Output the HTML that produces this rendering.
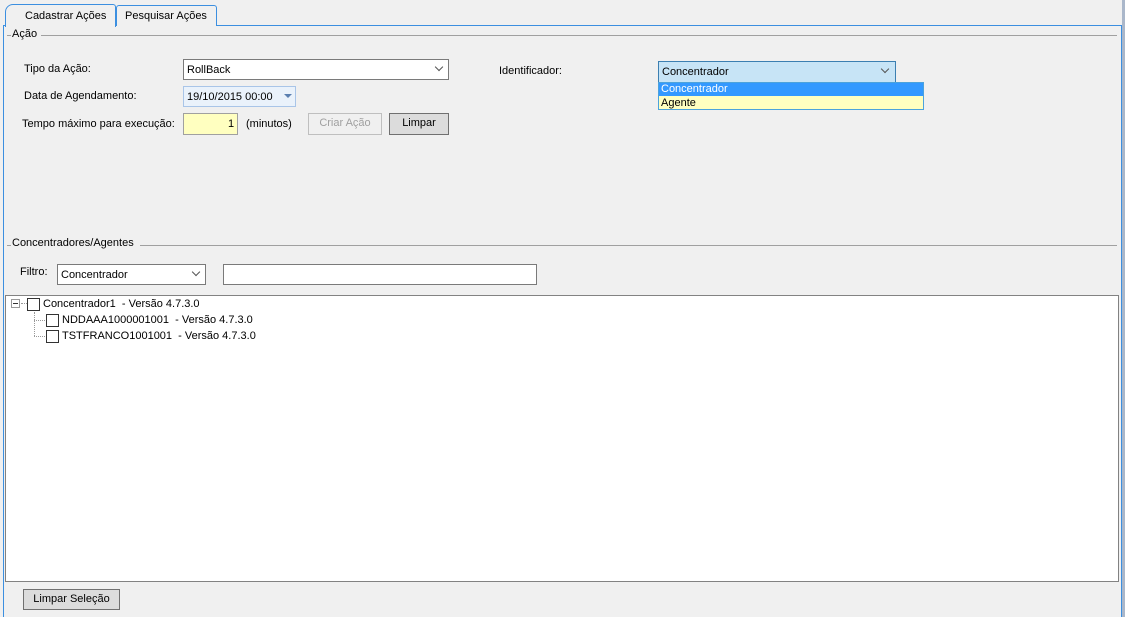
<!DOCTYPE html>
<html><head><style>
body{margin:0;width:1125px;height:617px;background:#f0f0f0;position:relative;overflow:hidden;font-family:"Liberation Sans",sans-serif;font-size:11px;color:#000}
div,span{position:absolute;box-sizing:border-box}
.t{white-space:nowrap;line-height:14px}
.btn{border:1px solid #adadad;background:#e1e1e1;text-align:center;line-height:19px}
.arrow{width:7px;height:7px;border-right:1.5px solid #555;border-bottom:1.5px solid #555;transform:rotate(45deg)}
.cb{width:13px;height:13px;border:1px solid #333;background:#fff}
</style></head><body>
<div style="left:1122px;top:0;width:3px;height:617px;background:#aab7ca"></div>
<div style="left:3px;top:25px;width:1119px;height:592px;border:1px solid #3c8fe0;border-bottom:none;background:#f0f0f0"></div>
<!-- tabs -->
<div style="left:116px;top:5px;width:101px;height:21px;border:1px solid #3c8fe0;border-bottom:none;border-radius:3px 3px 0 0;background:#f0f0f0"></div>
<div class="t" style="left:125px;top:9px">Pesquisar Ações</div>
<div style="left:5px;top:4px;width:111px;height:23px;border:1px solid #3c8fe0;border-bottom:none;border-radius:8px 3px 0 0;background:#f0f0f0"></div>
<div class="t" style="left:25px;top:9px">Cadastrar Ações</div>
<!-- group Ação -->
<div style="left:7px;top:35px;width:4px;height:1px;background:#a0a0a0"></div>
<div class="t" style="left:12px;top:27px">Ação</div>
<div style="left:41px;top:35px;width:1076px;height:1px;background:#a0a0a0"></div>
<div class="t" style="left:24px;top:62px">Tipo da Ação:</div>
<div style="left:183px;top:59px;width:266px;height:21px;border:1px solid #7a7a7a;background:#fff"></div>
<div class="t" style="left:187px;top:63px">RollBack</div>
<div class="arrow" style="left:436px;top:64px;width:6px;height:6px"></div>
<div class="t" style="left:24px;top:89px">Data de Agendamento:</div>
<div style="left:183px;top:86px;width:113px;height:21px;border:1px solid #a9c5e8;background:#eaf2fb"></div>
<div class="t" style="left:187px;top:90px">19/10/2015 00:00</div>
<div style="left:284px;top:94px;width:0;height:0;border-left:4px solid transparent;border-right:4px solid transparent;border-top:4px solid #5a7fb0"></div>
<div class="t" style="left:22px;top:117px">Tempo máximo para execução:</div>
<div style="left:183px;top:113px;width:55px;height:22px;border:1px solid #a0a0a0;background:#ffffc0"></div>
<div class="t" style="left:228px;top:117px">1</div>
<div class="t" style="left:246px;top:117px">(minutos)</div>
<div class="btn" style="left:308px;top:113px;width:74px;height:22px;border-color:#bfbfbf;background:#f0f0f0;color:#a0a0a0">Criar Ação</div>
<div class="btn" style="left:389px;top:113px;width:60px;height:22px;border-color:#707070;background:#dcdcdc">Limpar</div>
<div class="t" style="left:499px;top:64px">Identificador:</div>
<div style="left:658px;top:61px;width:238px;height:22px;border:1px solid #3c7fb1;background:#c7e4f6"></div>
<div class="t" style="left:662px;top:65px">Concentrador</div>
<div class="arrow" style="left:882px;top:66px;width:6px;height:6px"></div>
<div style="left:658px;top:82px;width:266px;height:28px;border:1px solid #4ca3dc;background:#ffffc0"></div>
<div style="left:659px;top:83px;width:264px;height:13px;background:#3399ff"></div>
<div class="t" style="left:661px;top:82px;color:#fff">Concentrador</div>
<div class="t" style="left:661px;top:96px">Agente</div>
<!-- group 2 -->
<div style="left:7px;top:245px;width:4px;height:1px;background:#a0a0a0"></div>
<div class="t" style="left:12px;top:236px">Concentradores/Agentes</div>
<div style="left:140px;top:245px;width:977px;height:1px;background:#a0a0a0"></div>
<div class="t" style="left:20px;top:265px">Filtro:</div>
<div style="left:57px;top:264px;width:149px;height:21px;border:1px solid #7a7a7a;background:#fff"></div>
<div class="t" style="left:61px;top:268px">Concentrador</div>
<div class="arrow" style="left:193px;top:269px;width:6px;height:6px"></div>
<div style="left:223px;top:264px;width:314px;height:21px;border:1px solid #7a7a7a;background:#fff"></div>
<div style="left:5px;top:295px;width:1114px;height:287px;border:1px solid #828282;background:#fff"></div>
<div style="left:11px;top:299px;width:9px;height:9px;border:1px solid #999;background:#fff"></div>
<div style="left:13px;top:303px;width:5px;height:1px;background:#333"></div>
<div style="left:21px;top:303px;width:6px;border-top:1px dotted #999"></div>
<div style="left:34px;top:312px;height:24px;border-left:1px dotted #999"></div>
<div style="left:34px;top:320px;width:13px;border-top:1px dotted #999"></div>
<div style="left:34px;top:336px;width:13px;border-top:1px dotted #999"></div>
<div class="cb" style="left:27px;top:298px"></div>
<div class="t" style="left:43px;top:297px">Concentrador1&nbsp; - Versão 4.7.3.0</div>
<div class="cb" style="left:46px;top:314px"></div>
<div class="t" style="left:62px;top:313px">NDDAAA1000001001&nbsp; - Versão 4.7.3.0</div>
<div class="cb" style="left:46px;top:330px"></div>
<div class="t" style="left:62px;top:329px">TSTFRANCO1001001&nbsp; - Versão 4.7.3.0</div>
<div class="btn" style="left:23px;top:589px;width:97px;height:21px;border-color:#707070;background:#dcdcdc">Limpar Seleção</div>
</body></html>
